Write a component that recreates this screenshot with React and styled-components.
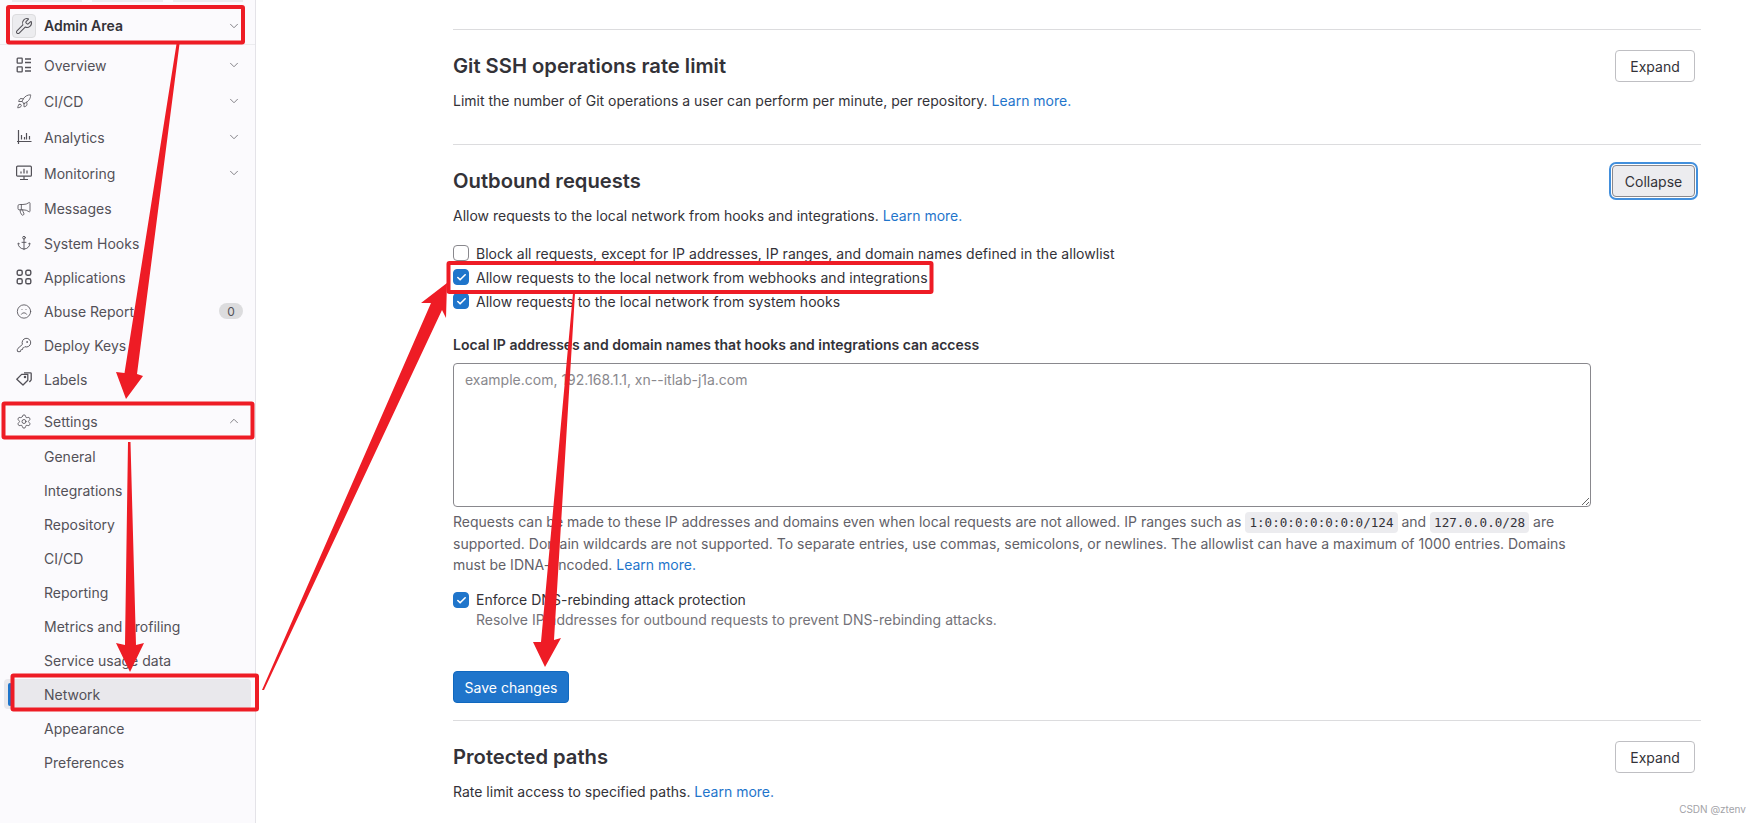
import React from 'react';
import styled, {createGlobalStyle} from 'styled-components';
import {Wrench, Rocket, Megaphone, Anchor, Frown, KeyRound, Settings, ChevronDown, ChevronUp, Check} from 'lucide-react';

const GlobalStyle = createGlobalStyle`
    * {
        box-sizing: border-box;
    }
    html, body {
        margin: 0;
        padding: 0;
        background: #fff;
    }
    body {
        font-family: Inter, "Noto Sans", sans-serif;
        font-size: 14px;
        color: #333238;
    }
`;

const Page = styled.div`
    position: relative;
    display: flex;
    width: 1760px;
    height: 823px;
    overflow: hidden;
`;

const Sidebar = styled.aside`
    flex: 0 0 256px;
    background: #fbfafd;
    border-right: 1px solid #e4e3e8;
    color: #535158;
`;

const TopStrip = styled.div`
    display: flex;
    gap: 10px;
    height: 2px;
    padding: 0 12px;
    & > span {
        flex: 1;
        background: #ececef;
    }
`;

const SidebarHeader = styled.div`
    display: flex;
    align-items: center;
    height: 43px;
    padding: 5px 12px 0 12px;
    border-bottom: 1px solid #ececef;
    margin-bottom: 2px;
    color: #333238;
    font-weight: 600;
`;

const HeaderIcon = styled.span`
    display: flex;
    align-items: center;
    justify-content: center;
    width: 24px;
    height: 24px;
    margin-right: 8px;
    background: #ececef;
    border: 1px solid #dcdcde;
    border-radius: 4px;
    color: #535158;
`;

const NavItem = styled.div`
    display: flex;
    align-items: center;
    height: ${props => props.$height || 34}px;
    padding: 0 12px 0 16px;
`;

const NavIcon = styled.span`
    display: flex;
    align-items: center;
    justify-content: center;
    flex: 0 0 16px;
    width: 16px;
    height: 16px;
    margin-right: 12px;
`;

const NavLabel = styled.span`
    flex: 1;
    white-space: nowrap;
`;

const SubItem = styled.div`
    display: flex;
    align-items: center;
    height: 34px;
    padding-left: 44px;
    white-space: nowrap;
`;

const ActiveSubItem = styled(SubItem)`
    position: relative;
    height: 30px;
    margin: 2px 4px 2px 4px;
    padding-left: 40px;
    background: #e9e8ec;
    border-radius: 4px;

    &::before {
        content: '';
        position: absolute;
        left: 4px;
        top: 4px;
        bottom: 3px;
        width: 4px;
        border-radius: 2px;
        background: #1f75cb;
    }
`;

const Chevron = styled.span`
    display: flex;
    margin-right: 2px;
    color: #737278;
`;

const Badge = styled.span`
    display: flex;
    align-items: center;
    justify-content: center;
    width: 24px;
    height: 16px;
    border-radius: 8px;
    background: #dcdcde;
    font-size: 12px;
`;

const SettingsGap = styled.div`
    height: 7px;
`;

const Main = styled.main`
    flex: 1;
    padding: 29px 0 0 197px;
`;

const Section = styled.section`
    width: 1248px;
    padding: 20px 6px ${props => props.$bottom}px 0;
    border-top: 1px solid #dcdcde;
`;

const SectionHead = styled.div`
    display: flex;
    justify-content: space-between;
    align-items: flex-start;
`;

const Title = styled.h2`
    margin: 0;
    font-size: 20.2px;
    line-height: 32px;
    font-weight: 600;
    color: #333238;
`;

const Desc = styled.p`
    margin: 8px 0 0;
    line-height: 21px;
    color: #333238;
`;

const Link = styled.a`
    color: #1f75cb;
    text-decoration: none;
`;

const Button = styled.button`
    width: ${props => props.$width}px;
    height: 32px;
    padding: 0;
    font: inherit;
    color: #333238;
    background: #fff;
    border: 1px solid #bfbfc3;
    border-radius: 4px;
`;

const FocusedButton = styled(Button)`
    background: #ececef;
    border-color: #89888d;
    box-shadow: 0 0 0 1px #fff, 0 0 0 3px #428fdc;
`;

const SaveButton = styled(Button)`
    display: block;
    margin-top: 41px;
    color: #fff;
    background: #1f75cb;
    border-color: #1068bf;
`;

const CheckList = styled.div`
    margin-top: 15px;
`;

const CheckRow = styled.label`
    display: flex;
    align-items: center;
    height: ${props => props.$height || 24}px;
    gap: 7px;
    letter-spacing: 0.03px;
`;

const Box = styled.span`
    display: flex;
    align-items: center;
    justify-content: center;
    flex: 0 0 16px;
    width: 16px;
    height: 16px;
    border-radius: 4px;
    color: #fff;
    background: ${props => (props.$checked ? '#1f75cb' : '#fff')};
    border: 1px solid ${props => (props.$checked ? '#1f75cb' : '#89888d')};
`;

const FieldLabel = styled.div`
    margin-top: 21px;
    font-weight: 600;
    line-height: 22px;
`;

const TextArea = styled.textarea`
    display: block;
    width: 1138px;
    height: 144px;
    margin-top: 7px;
    padding: 5px 11px;
    font: inherit;
    line-height: 21px;
    color: #333238;
    background: #fff;
    border: 1px solid #89888d;
    border-radius: 4px;
    outline: none;

    &::placeholder {
        color: #89888d;
    }
`;

const Help = styled.p`
    width: 1138px;
    margin: 4px 0 0;
    line-height: 21px;
    color: #626168;
`;

const Code = styled.code`
    padding: 3px 4px;
    font-family: "DejaVu Sans Mono", monospace;
    font-size: 12.6px;
    color: #333238;
    background: #ececef;
    border-radius: 4px;
`;

const Enforce = styled.div`
    margin-top: 15px;
    line-height: 20px;
`;

const EnforceHint = styled.div`
    padding-left: 23px;
    line-height: 20px;
    color: #737278;
`;

const Watermark = styled.div`
    position: absolute;
    right: 14px;
    bottom: 7px;
    font-size: 10px;
    line-height: 14px;
    color: #a3a3a8;
`;

const Annotations = styled.svg`
    position: absolute;
    left: 0;
    top: 0;
    pointer-events: none;
`;

const RED = '#ee1c25';

const OverviewIcon = () => (
    <svg width="16" height="16" viewBox="0 0 16 16" fill="none" stroke="currentColor" strokeWidth="1.3">
        <rect x="1.2" y="1.2" width="5" height="5" rx=".6"/>
        <rect x="1.2" y="9.8" width="5" height="5" rx=".6"/>
        <path d="M9 2h6M9 5.5h6M9 10.5h6M9 14h6"/>
    </svg>
);

const AnalyticsIcon = () => (
    <svg width="16" height="16" viewBox="0 0 16 16" fill="none" stroke="currentColor" strokeWidth="1.2">
        <path d="M2.5 1v14M1 12.5h14.5M5.5 6v4.5M8.5 8v2.5M10.5 4v6.5M13.5 7v3.5"/>
    </svg>
);

const MonitorIcon = () => (
    <svg width="16" height="16" viewBox="0 0 16 16" fill="none" stroke="currentColor" strokeWidth="1.2">
        <rect x=".6" y="1.2" width="14.8" height="10" rx="1"/>
        <path d="M5 8.5V6.5M8 8.5V3.8M11 8.5V5.5M8 11.2v3M4 14.5h8"/>
    </svg>
);

const AppsIcon = () => (
    <svg width="16" height="16" viewBox="0 0 16 16" fill="none" stroke="currentColor" strokeWidth="1.4">
        <rect x="1.2" y="1.2" width="5" height="5" rx="1.6"/>
        <rect x="9.8" y="1.2" width="5" height="5" rx="1.6"/>
        <rect x="1.2" y="9.8" width="5" height="5" rx="1.6"/>
        <rect x="9.8" y="9.8" width="5" height="5" rx="1.6"/>
    </svg>
);

const LabelsIcon = () => (
    <svg width="16" height="16" viewBox="0 0 16 16" fill="none" stroke="currentColor" strokeWidth="1.3" strokeLinejoin="round">
        <path d="M.8 8.2 5.6 3.4h6.2v5.8L7 14z"/>
        <path d="M8 1.8h6.4c.5 0 .8.3.8.8v6.2L13.4 11"/>
        <circle cx="9" cy="6" r=".6"/>
    </svg>
);

const NAV_ITEMS = [
    {label: 'Overview', icon: <OverviewIcon/>, chevron: true, height: 36},
    {label: 'CI/CD', icon: <Rocket size={19} strokeWidth={1.3}/>, chevron: true, height: 36},
    {label: 'Analytics', icon: <AnalyticsIcon/>, chevron: true, height: 36},
    {label: 'Monitoring', icon: <MonitorIcon/>, chevron: true, height: 36},
    {label: 'Messages', icon: <Megaphone size={19} strokeWidth={1.3}/>, height: 35},
    {label: 'System Hooks', icon: <Anchor size={18} strokeWidth={1.4}/>},
    {label: 'Applications', icon: <AppsIcon/>},
    {label: 'Abuse Reports', icon: <Frown size={19} strokeWidth={1.3}/>, badge: '0'},
    {label: 'Deploy Keys', icon: <KeyRound size={18} strokeWidth={1.4}/>},
    {label: 'Labels', icon: <LabelsIcon/>},
];

const SETTINGS_BEFORE = ['General', 'Integrations', 'Repository', 'CI/CD', 'Reporting', 'Metrics and profiling', 'Service usage data'];
const SETTINGS_AFTER = ['Appearance', 'Preferences'];

const Check16 = ({checked}) => (
    <Box $checked={checked}>
        {checked && <Check size={11} strokeWidth={3.5}/>}
    </Box>
);

const CHECKS = [
    {label: 'Block all requests, except for IP addresses, IP ranges, and domain names defined in the allowlist', checked: false},
    {label: 'Allow requests to the local network from webhooks and integrations', checked: true},
    {label: 'Allow requests to the local network from system hooks', checked: true},
];

const Markup = () => (
    <Annotations width="1760" height="823" viewBox="0 0 1760 823">
        <g fill="none" stroke={RED} strokeWidth="4">
            <rect x="8" y="7" width="235" height="35.5" rx="1"/>
            <rect x="3.5" y="403.5" width="249" height="34" rx="1"/>
            <rect x="12.5" y="675.5" width="244.5" height="34" rx="1"/>
            <rect x="448.5" y="263" width="483" height="29" rx="1"/>
        </g>
        <g fill={RED}>
            <polygon points="176.5,44 179.5,44 137,374 143,376 126,399 116,372 124.5,373"/>
            <polygon points="128,442 130.5,442 136,645 144,643 130,672 116,643 125,645"/>
            <polygon points="262,690 264,690 442,310 446,318 447,283 421,303 431,303"/>
            <polygon points="573,293 575,293 554,640 561,638 545,667 533,642 541,642"/>
        </g>
    </Annotations>
);

export default function App() {
    return (
        <Page>
            <GlobalStyle/>
            <Sidebar>
                <TopStrip><span/><span/><span/></TopStrip>
                <SidebarHeader>
                    <HeaderIcon><Wrench size={18} strokeWidth={1.4}/></HeaderIcon>
                    <NavLabel>Admin Area</NavLabel>
                    <Chevron><ChevronDown size={14} strokeWidth={1.5}/></Chevron>
                </SidebarHeader>
                {NAV_ITEMS.map(item => (
                    <NavItem key={item.label} $height={item.height}>
                        <NavIcon>{item.icon}</NavIcon>
                        <NavLabel>{item.label}</NavLabel>
                        {item.chevron && <Chevron><ChevronDown size={14} strokeWidth={1.5}/></Chevron>}
                        {item.badge && <Badge>{item.badge}</Badge>}
                    </NavItem>
                ))}
                <SettingsGap/>
                <NavItem $height={36}>
                    <NavIcon><Settings size={19} strokeWidth={1.3}/></NavIcon>
                    <NavLabel>Settings</NavLabel>
                    <Chevron><ChevronUp size={14} strokeWidth={1.5}/></Chevron>
                </NavItem>
                {SETTINGS_BEFORE.map(label => <SubItem key={label}>{label}</SubItem>)}
                <ActiveSubItem>Network</ActiveSubItem>
                {SETTINGS_AFTER.map(label => <SubItem key={label}>{label}</SubItem>)}
            </Sidebar>
            <Main>
                <Section $bottom={33}>
                    <SectionHead>
                        <div>
                            <Title>Git SSH operations rate limit</Title>
                            <Desc>Limit the number of Git operations a user can perform per minute, per repository. <Link>Learn more.</Link></Desc>
                        </div>
                        <Button $width={80}>Expand</Button>
                    </SectionHead>
                </Section>
                <Section $bottom={17}>
                    <SectionHead>
                        <div>
                            <Title>Outbound requests</Title>
                            <Desc>Allow requests to the local network from hooks and integrations. <Link>Learn more.</Link></Desc>
                        </div>
                        <FocusedButton $width={83}>Collapse</FocusedButton>
                    </SectionHead>
                    <CheckList>
                        {CHECKS.map(check => (
                            <CheckRow key={check.label}>
                                <Check16 checked={check.checked}/>
                                {check.label}
                            </CheckRow>
                        ))}
                    </CheckList>
                    <FieldLabel>Local IP addresses and domain names that hooks and integrations can access</FieldLabel>
                    <TextArea readOnly placeholder="example.com, 192.168.1.1, xn--itlab-j1a.com"/>
                    <Help>
                        Requests can be made to these IP addresses and domains even when local requests are not allowed. IP ranges such as <Code>1:0:0:0:0:0:0:0/124</Code> and <Code>127.0.0.0/28</Code> are supported. Domain wildcards are not supported. To separate entries, use commas, semicolons, or newlines. The allowlist can have a maximum of 1000 entries. Domains must be IDNA-encoded. <Link>Learn more.</Link>
                    </Help>
                    <Enforce>
                        <CheckRow $height={20}>
                            <Check16 checked/>
                            Enforce DNS-rebinding attack protection
                        </CheckRow>
                        <EnforceHint>Resolve IP addresses for outbound requests to prevent DNS-rebinding attacks.</EnforceHint>
                    </Enforce>
                    <SaveButton $width={116}>Save changes</SaveButton>
                </Section>
                <Section $bottom={20}>
                    <SectionHead>
                        <div>
                            <Title>Protected paths</Title>
                            <Desc>Rate limit access to specified paths. <Link>Learn more.</Link></Desc>
                        </div>
                        <Button $width={80}>Expand</Button>
                    </SectionHead>
                </Section>
            </Main>
            <Markup/>
            <Watermark>CSDN @ztenv</Watermark>
        </Page>
    );
}
